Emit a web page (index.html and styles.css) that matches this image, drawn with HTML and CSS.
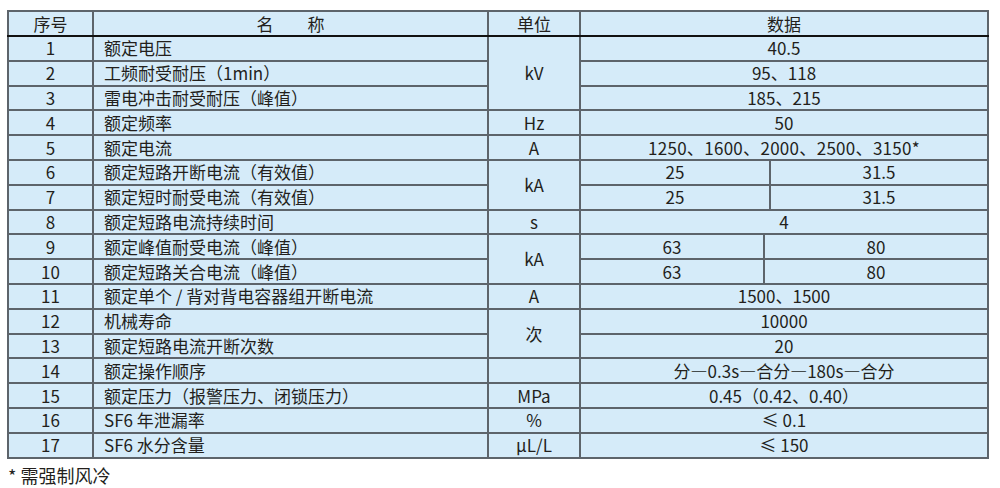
FILE: index.html
```html
<!DOCTYPE html>
<html lang="zh">
<head>
<meta charset="utf-8">
<link rel="stylesheet" href="styles.css">
</head>
<body>
<table class="spec">
  <colgroup>
    <col class="c-no"><col class="c-name"><col class="c-unit"><col class="c-da"><col class="c-db"><col class="c-dc">
  </colgroup>
  <thead>
    <tr><th>序号</th><th>名　　称</th><th>单位</th><th colspan="3">数据</th></tr>
  </thead>
  <tbody>
    <tr><td>1</td><td class="name">额定电压</td><td rowspan="3">kV</td><td colspan="3">40.5</td></tr>
    <tr><td>2</td><td class="name">工频耐受耐压（1min）</td><td colspan="3">95、118</td></tr>
    <tr><td>3</td><td class="name">雷电冲击耐受耐压（峰值）</td><td colspan="3">185、215</td></tr>
    <tr><td>4</td><td class="name">额定频率</td><td>Hz</td><td colspan="3">50</td></tr>
    <tr><td>5</td><td class="name">额定电流</td><td>A</td><td colspan="3" class="num">1250、1600、2000、2500、3150*</td></tr>
    <tr><td>6</td><td class="name">额定短路开断电流（有效值）</td><td rowspan="2">kA</td><td colspan="2" class="split">25</td><td>31.5</td></tr>
    <tr><td>7</td><td class="name">额定短时耐受电流（有效值）</td><td colspan="2" class="split">25</td><td>31.5</td></tr>
    <tr><td>8</td><td class="name">额定短路电流持续时间</td><td>s</td><td colspan="3">4</td></tr>
    <tr><td>9</td><td class="name">额定峰值耐受电流（峰值）</td><td rowspan="2">kA</td><td class="split">63</td><td colspan="2">80</td></tr>
    <tr><td>10</td><td class="name">额定短路关合电流（峰值）</td><td class="split">63</td><td colspan="2">80</td></tr>
    <tr><td>11</td><td class="name">额定单个 / 背对背电容器组开断电流</td><td>A</td><td colspan="3">1500、1500</td></tr>
    <tr><td>12</td><td class="name">机械寿命</td><td rowspan="2">次</td><td colspan="3">10000</td></tr>
    <tr><td>13</td><td class="name">额定短路电流开断次数</td><td colspan="3">20</td></tr>
    <tr><td>14</td><td class="name">额定操作顺序</td><td></td><td colspan="3">分—0.3s—合分—180s—合分</td></tr>
    <tr><td>15</td><td class="name">额定压力（报警压力、闭锁压力）</td><td>MPa</td><td colspan="3">0.45（0.42、0.40）</td></tr>
    <tr><td>16</td><td class="name">SF6 年泄漏率</td><td>%</td><td colspan="3">≤ 0.1</td></tr>
    <tr><td>17</td><td class="name">SF6 水分含量</td><td>μL/L</td><td colspan="3">≤ 150</td></tr>
  </tbody>
</table>
<p class="note">* 需强制风冷</p>
</body>
</html>
```

FILE: styles.css
```css
html, body {
  margin: 0;
  padding: 0;
  background: #ffffff;
}
body {
  font-family: "Noto Sans CJK SC", "Noto Sans", sans-serif;
  color: #231f1c;
  font-size: 17px;
}
.spec {
  margin: 10px 0 0 7px;
  width: 981px;
  border-collapse: collapse;
  table-layout: fixed;
  background: #d5ebf9;
  border: 2px solid #3d4248;
}
.c-no { width: 85px; }
.c-name { width: 395px; }
.c-unit { width: 92px; }
.c-da { width: 184px; }
.c-db { width: 6px; }
.c-dc { width: 218px; }
.spec tr {
  height: 24.8px;
}
.spec th, .spec td {
  border: 2px solid #5d646b;
  padding: 0;
  line-height: 22px;
  text-align: center;
  font-weight: normal;
  white-space: nowrap;
}
.spec thead tr {
  height: 25px;
}
.spec thead th {
  border-bottom: 2px solid #111111;
}
.spec td.name {
  text-align: left;
  padding-left: 10px;
}
.spec td.num {
  letter-spacing: 0.3px;
}
.spec td.split {
  border-right: 1.5px solid #4a4f55;
}
.note {
  margin: 5px 0 0 8px;
  font-size: 18px;
  line-height: 22px;
}
```
